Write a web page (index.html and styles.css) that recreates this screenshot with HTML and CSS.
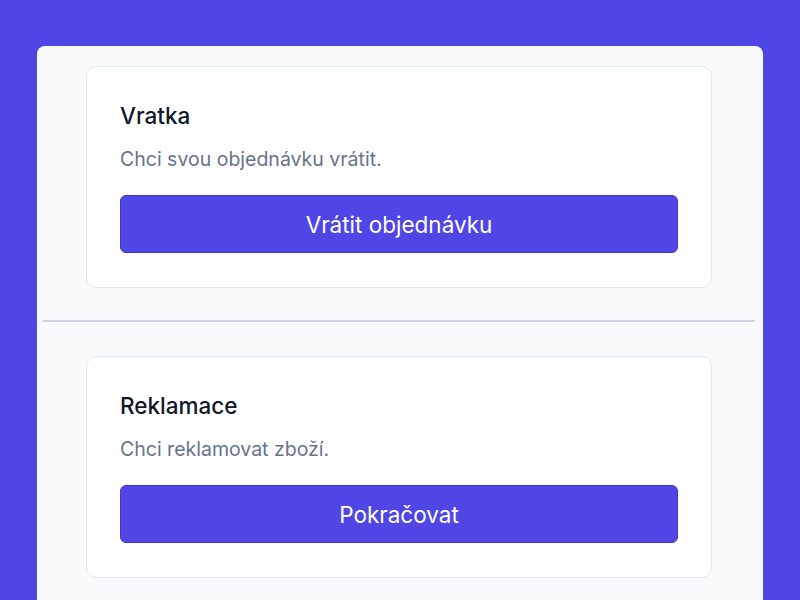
FILE: index.html
```html
<!DOCTYPE html>
<html>
<head>
    <meta charset="utf-8">
    <link rel="stylesheet" href="styles.css">
</head>
<body>
    <div class="panel">
        <div class="card">
            <h2 class="ctitle">Vratka</h2>
            <p class="cdesc">Chci svou objednávku vrátit.</p>
            <button type="button" class="cbtn">Vrátit objednávku</button>
        </div>

        <hr class="divider">

        <div class="card">
            <h2 class="ctitle">Reklamace</h2>
            <p class="cdesc">Chci reklamovat zboží.</p>
            <button type="button" class="cbtn">Pokračovat</button>
        </div>
    </div>
</body>
</html>
```

FILE: styles.css
```css
*{
    margin: 0;
    padding: 0;
    box-sizing: border-box;
}
body {
    font-family: Inter, "Noto Sans", sans-serif;
    background-color: #4f46e5;
    padding-top: 46px;
    height: 600px;
    overflow: hidden;
}
.panel{
    margin: 0 37px;
    background-color: #f8fafc;
    border-radius: 8px;
    padding: 20px 51px 40px 49px;
    height: 620px;
}
.card{
    background-color: #fff;
    border: 1px solid #e2e8f0;
    border-radius: 10px;
    padding: 33px 33px 34px;
}
.ctitle{
    font-size: 22.5px;
    font-weight: 500;
    line-height: 32px;
    color: #0f172a;
}
.cdesc{
    margin-top: 13px;
    font-size: 19.5px;
    line-height: 28px;
    color: #64748b;
}
.cbtn{
    display: block;
    width: 100%;
    height: 58px;
    margin-top: 22px;
    background-color: #4f46e5;
    border: 1px solid #4338ca;
    border-radius: 6px;
    color: #fff;
    font-family: inherit;
    font-size: 22.5px;
    cursor: pointer;
}
.divider{
    border: none;
    border-top: 2px solid #cbd5e1;
    margin: 32px -43px 34px -43px;
}
```
